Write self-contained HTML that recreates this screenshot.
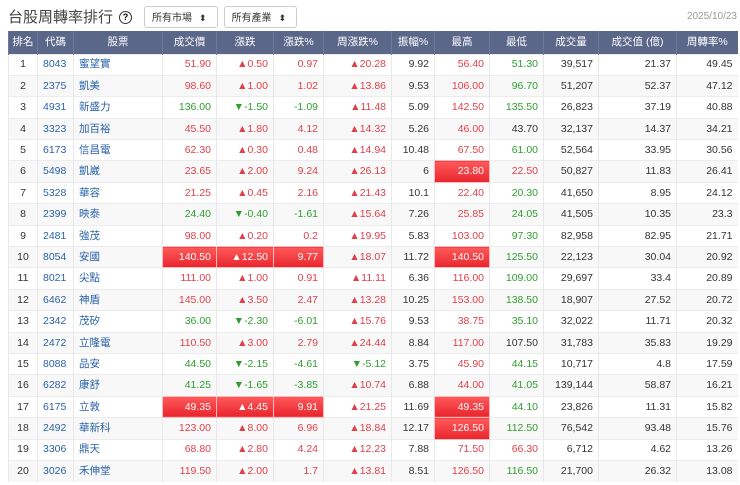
<!DOCTYPE html>
<html><head><meta charset="utf-8">
<style>
body{margin:0;background:#fff;font-family:"Liberation Sans","Noto Sans CJK TC",sans-serif;width:740px;height:485px;overflow:hidden}
.top{position:absolute;left:8px;top:5px;height:24px;display:flex;align-items:center}
.title{font-size:15px;color:#444;margin-right:6px;line-height:1}
.q{width:11px;height:11px;border:1.5px solid #333;border-radius:50%;font-size:9px;line-height:11px;text-align:center;margin-right:12px;font-weight:bold}
.sel{border:1px solid #ccc;border-radius:3px;height:22px;box-sizing:border-box;font-size:10px;padding:3px 10px 0 7px;display:flex;align-items:center;margin-right:6px;color:#333;line-height:1}
.sel:after{content:"⬍";font-size:9px;margin-left:7px}
.date{position:absolute;right:3px;top:12px;font-size:10px;color:#999;line-height:1}
table{position:absolute;left:8px;top:31px;border-collapse:collapse;font-size:10.5px;width:729px;table-layout:fixed;line-height:1}
th{background:#5b6789;color:#fff;font-weight:normal;height:23px;border-left:1px solid #6d789a;padding:0 2px;white-space:nowrap;text-align:center;box-sizing:border-box}
td{height:21.4px;padding:0 5px;border-left:1px solid #e8e8e8;border-top:1px solid #ececec;color:#333;text-align:right;box-sizing:border-box;white-space:nowrap;vertical-align:middle}
tr:nth-child(odd) td{background:#f8f8f8}
td:nth-child(1){text-align:center}
td:nth-child(2),td:nth-child(3){text-align:left;color:#2a63a8}
.r{color:#e0404a}.g{color:#2e9e2e}
td.h{background:linear-gradient(#ff5a5a,#e8262e)!important;color:#fff;border:1px solid #fbb}
</style></head><body>
<div class="top"><span class="title">台股周轉率排行</span><span class="q">?</span><span class="sel">所有市場</span><span class="sel">所有產業</span></div>
<div class="date">2025/10/23</div>
<table>
<colgroup><col style="width:29px"><col style="width:36px"><col style="width:89px"><col style="width:54px"><col style="width:57px"><col style="width:50px"><col style="width:68px"><col style="width:43px"><col style="width:55px"><col style="width:54px"><col style="width:55px"><col style="width:78px"><col style="width:61px"></colgroup>
<tr><th>排名</th><th>代碼</th><th>股票</th><th>成交價</th><th>漲跌</th><th>漲跌%</th><th>周漲跌%</th><th>振幅%</th><th>最高</th><th>最低</th><th>成交量</th><th>成交值 (億)</th><th>周轉率%</th></tr>
<tr><td>1</td><td>8043</td><td>蜜望實</td><td class="r">51.90</td><td class="r">▲0.50</td><td class="r">0.97</td><td class="r">▲20.28</td><td>9.92</td><td class="r">56.40</td><td class="g">51.30</td><td>39,517</td><td>21.37</td><td>49.45</td></tr>
<tr><td>2</td><td>2375</td><td>凱美</td><td class="r">98.60</td><td class="r">▲1.00</td><td class="r">1.02</td><td class="r">▲13.86</td><td>9.53</td><td class="r">106.00</td><td class="g">96.70</td><td>51,207</td><td>52.37</td><td>47.12</td></tr>
<tr><td>3</td><td>4931</td><td>新盛力</td><td class="g">136.00</td><td class="g">▼-1.50</td><td class="g">-1.09</td><td class="r">▲11.48</td><td>5.09</td><td class="r">142.50</td><td class="g">135.50</td><td>26,823</td><td>37.19</td><td>40.88</td></tr>
<tr><td>4</td><td>3323</td><td>加百裕</td><td class="r">45.50</td><td class="r">▲1.80</td><td class="r">4.12</td><td class="r">▲14.32</td><td>5.26</td><td class="r">46.00</td><td>43.70</td><td>32,137</td><td>14.37</td><td>34.21</td></tr>
<tr><td>5</td><td>6173</td><td>信昌電</td><td class="r">62.30</td><td class="r">▲0.30</td><td class="r">0.48</td><td class="r">▲14.94</td><td>10.48</td><td class="r">67.50</td><td class="g">61.00</td><td>52,564</td><td>33.95</td><td>30.56</td></tr>
<tr><td>6</td><td>5498</td><td>凱崴</td><td class="r">23.65</td><td class="r">▲2.00</td><td class="r">9.24</td><td class="r">▲26.13</td><td>6</td><td class="h">23.80</td><td class="r">22.50</td><td>50,827</td><td>11.83</td><td>26.41</td></tr>
<tr><td>7</td><td>5328</td><td>華容</td><td class="r">21.25</td><td class="r">▲0.45</td><td class="r">2.16</td><td class="r">▲21.43</td><td>10.1</td><td class="r">22.40</td><td class="g">20.30</td><td>41,650</td><td>8.95</td><td>24.12</td></tr>
<tr><td>8</td><td>2399</td><td>映泰</td><td class="g">24.40</td><td class="g">▼-0.40</td><td class="g">-1.61</td><td class="r">▲15.64</td><td>7.26</td><td class="r">25.85</td><td class="g">24.05</td><td>41,505</td><td>10.35</td><td>23.3</td></tr>
<tr><td>9</td><td>2481</td><td>強茂</td><td class="r">98.00</td><td class="r">▲0.20</td><td class="r">0.2</td><td class="r">▲19.95</td><td>5.83</td><td class="r">103.00</td><td class="g">97.30</td><td>82,958</td><td>82.95</td><td>21.71</td></tr>
<tr><td>10</td><td>8054</td><td>安國</td><td class="h">140.50</td><td class="h">▲12.50</td><td class="h">9.77</td><td class="r">▲18.07</td><td>11.72</td><td class="h">140.50</td><td class="g">125.50</td><td>22,123</td><td>30.04</td><td>20.92</td></tr>
<tr><td>11</td><td>8021</td><td>尖點</td><td class="r">111.00</td><td class="r">▲1.00</td><td class="r">0.91</td><td class="r">▲11.11</td><td>6.36</td><td class="r">116.00</td><td class="g">109.00</td><td>29,697</td><td>33.4</td><td>20.89</td></tr>
<tr><td>12</td><td>6462</td><td>神盾</td><td class="r">145.00</td><td class="r">▲3.50</td><td class="r">2.47</td><td class="r">▲13.28</td><td>10.25</td><td class="r">153.00</td><td class="g">138.50</td><td>18,907</td><td>27.52</td><td>20.72</td></tr>
<tr><td>13</td><td>2342</td><td>茂矽</td><td class="g">36.00</td><td class="g">▼-2.30</td><td class="g">-6.01</td><td class="r">▲15.76</td><td>9.53</td><td class="r">38.75</td><td class="g">35.10</td><td>32,022</td><td>11.71</td><td>20.32</td></tr>
<tr><td>14</td><td>2472</td><td>立隆電</td><td class="r">110.50</td><td class="r">▲3.00</td><td class="r">2.79</td><td class="r">▲24.44</td><td>8.84</td><td class="r">117.00</td><td>107.50</td><td>31,783</td><td>35.83</td><td>19.29</td></tr>
<tr><td>15</td><td>8088</td><td>品安</td><td class="g">44.50</td><td class="g">▼-2.15</td><td class="g">-4.61</td><td class="g">▼-5.12</td><td>3.75</td><td class="r">45.90</td><td class="g">44.15</td><td>10,717</td><td>4.8</td><td>17.59</td></tr>
<tr><td>16</td><td>6282</td><td>康舒</td><td class="g">41.25</td><td class="g">▼-1.65</td><td class="g">-3.85</td><td class="r">▲10.74</td><td>6.88</td><td class="r">44.00</td><td class="g">41.05</td><td>139,144</td><td>58.87</td><td>16.21</td></tr>
<tr><td>17</td><td>6175</td><td>立敦</td><td class="h">49.35</td><td class="h">▲4.45</td><td class="h">9.91</td><td class="r">▲21.25</td><td>11.69</td><td class="h">49.35</td><td class="g">44.10</td><td>23,826</td><td>11.31</td><td>15.82</td></tr>
<tr><td>18</td><td>2492</td><td>華新科</td><td class="r">123.00</td><td class="r">▲8.00</td><td class="r">6.96</td><td class="r">▲18.84</td><td>12.17</td><td class="h">126.50</td><td class="g">112.50</td><td>76,542</td><td>93.48</td><td>15.76</td></tr>
<tr><td>19</td><td>3306</td><td>鼎天</td><td class="r">68.80</td><td class="r">▲2.80</td><td class="r">4.24</td><td class="r">▲12.23</td><td>7.88</td><td class="r">71.50</td><td class="r">66.30</td><td>6,712</td><td>4.62</td><td>13.26</td></tr>
<tr><td>20</td><td>3026</td><td>禾伸堂</td><td class="r">119.50</td><td class="r">▲2.00</td><td class="r">1.7</td><td class="r">▲13.81</td><td>8.51</td><td class="r">126.50</td><td class="g">116.50</td><td>21,700</td><td>26.32</td><td>13.08</td></tr>
</table>
</body></html>
